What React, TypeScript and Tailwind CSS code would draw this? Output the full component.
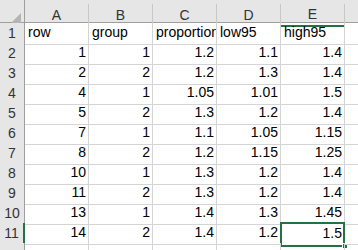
const rows: [number, number, number, number, number][] = [
  [1, 1, 1.2, 1.1, 1.4],
  [2, 2, 1.2, 1.3, 1.4],
  [4, 1, 1.05, 1.01, 1.5],
  [5, 2, 1.3, 1.2, 1.4],
  [7, 1, 1.1, 1.05, 1.15],
  [8, 2, 1.2, 1.15, 1.25],
  [10, 1, 1.3, 1.2, 1.4],
  [11, 2, 1.3, 1.2, 1.4],
  [13, 1, 1.4, 1.3, 1.45],
  [14, 2, 1.4, 1.2, 1.5],
]

const cols = ['A', 'B', 'C', 'D', 'E']
const headers = ['row', 'group', 'proportion', 'low95', 'high95']

const rowCls = 'grid h-[20px] grid-cols-[25px_64px_64px_64px_64px_64px_1fr]'

function RowHead({ n, active }: { n: number | string; active?: boolean }) {
  return (
    <div
      className={
        'flex items-center justify-center border-b border-r border-b-[#d4d4d4] bg-[#e6e6e6] text-[14px] text-[#333] ' +
        (active ? 'border-r-2 border-r-[#217346]' : 'border-r-[#9e9e9e]')
      }
    >
      {n}
    </div>
  )
}

export default function App() {
  return (
    <div className="h-[250px] w-[358px] overflow-hidden bg-white font-['Liberation_Sans',Arial,sans-serif] text-black">
      {/* column headers */}
      <div className="grid h-[23px] grid-cols-[25px_64px_64px_64px_64px_64px_1fr] border-b border-[#9e9e9e] bg-[#e6e6e6]">
        <div className="flex items-end justify-end border-r border-[#9e9e9e] pb-[2px] pr-[3px]">
          <svg width="12" height="12" viewBox="0 0 12 12" aria-hidden>
            <polygon points="12,0 12,12 0,12" fill="#b4b4b4" />
          </svg>
        </div>
        {cols.map((c) => (
          <div key={c} className="flex flex-col">
            <div className="mt-[4px] flex flex-1 items-center justify-center border-r border-[#c8c8c8] text-[14px] text-[#333]">
              {c}
            </div>
            {c === 'E' ? <div className="h-[2px] bg-[#217346]" /> : null}
          </div>
        ))}
        <div className="mt-[4px]" />
      </div>

      {/* row 1 */}
      <div className={rowCls}>
        <RowHead n={1} />
        {headers.map((h) => (
          <div key={h} className="overflow-hidden whitespace-nowrap border-b border-r border-[#d4d4d4] pl-[3px] text-[14px] leading-[19px]">
            {h}
          </div>
        ))}
        <div className="border-b border-[#d4d4d4]" />
      </div>

      {rows.map((r, i) => {
        const last = i === rows.length - 1
        return (
          <div key={i} className={rowCls}>
            <RowHead n={i + 2} active={last} />
            {r.map((v, j) =>
              last && j === 4 ? (
                <div key={j} className="-mb-[2px] -ml-[1px] -mt-[1px] flex flex-col border-2 border-[#217346] bg-white">
                  <div className="flex-1 pr-[1px] text-right text-[14px] leading-[18px]">{v}</div>
                  <div className="-mb-[4px] -mr-[5px] flex justify-end">
                    <div className="h-[6px] w-[6px] border border-white bg-[#217346]" />
                  </div>
                </div>
              ) : (
                <div key={j} className="border-b border-r border-[#d4d4d4] pr-[2px] text-right text-[14px] leading-[19px]">
                  {v}
                </div>
              ),
            )}
            <div className="border-b border-[#d4d4d4]" />
          </div>
        )
      })}

      {/* partial row 12 */}
      <div className={rowCls}>
        <RowHead n="" />
        {cols.map((c) => (
          <div key={c} className="border-r border-[#d4d4d4]" />
        ))}
        <div />
      </div>
    </div>
  )
}
